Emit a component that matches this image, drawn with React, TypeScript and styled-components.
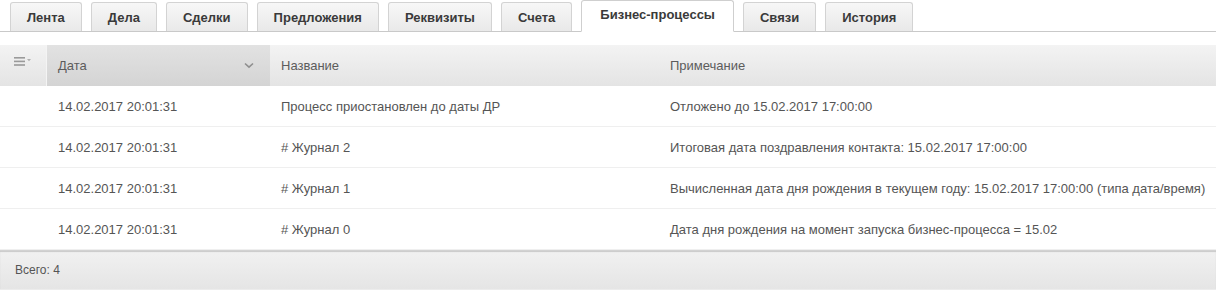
import React from "react";
import styled, { createGlobalStyle } from "styled-components";

const GlobalStyle = createGlobalStyle`
  html, body {
    margin: 0;
    padding: 0;
    background: #fff;
    font-family: "Liberation Sans", Arial, sans-serif;
  }
`;

interface TabProps {
  $active?: boolean;
}

const tabs = [
  "Лента",
  "Дела",
  "Сделки",
  "Предложения",
  "Реквизиты",
  "Счета",
  "Бизнес-процессы",
  "Связи",
  "История",
];

const rows = [
  {
    date: "14.02.2017 20:01:31",
    name: "Процесс приостановлен до даты ДР",
    note: "Отложено до 15.02.2017 17:00:00",
  },
  {
    date: "14.02.2017 20:01:31",
    name: "# Журнал 2",
    note: "Итоговая дата поздравления контакта: 15.02.2017 17:00:00",
  },
  {
    date: "14.02.2017 20:01:31",
    name: "# Журнал 1",
    note: "Вычисленная дата дня рождения в текущем году: 15.02.2017 17:00:00 (типа дата/время)",
  },
  {
    date: "14.02.2017 20:01:31",
    name: "# Журнал 0",
    note: "Дата дня рождения на момент запуска бизнес-процесса = 15.02",
  },
];

export default function App() {
  return (
    <Page>
      <GlobalStyle />
      <TabBar>
        {tabs.map((t, i) => (
          <Tab key={t} $active={i === 6}>
            {t}
          </Tab>
        ))}
      </TabBar>
      <Grid>
        <HeadRow>
          <MenuCell>
            <svg width="18" height="10" viewBox="0 0 18 10">
              <rect x="0" y="0" width="11" height="1.6" fill="#9a9a9a" />
              <rect x="0" y="3.6" width="11" height="1.6" fill="#9a9a9a" />
              <rect x="0" y="7.2" width="11" height="1.6" fill="#9a9a9a" />
              <path d="M13 2 L17 2 L15 4.2 Z" fill="#b0b0b0" />
            </svg>
          </MenuCell>
          <HeadCell $sorted>
            Дата
            <svg width="10" height="7" viewBox="0 0 10 7">
              <path
                d="M1 1.5 L5 5.2 L9 1.5"
                stroke="#8f8f8f"
                strokeWidth="1.6"
                fill="none"
              />
            </svg>
          </HeadCell>
          <HeadCell>Название</HeadCell>
          <HeadCell>Примечание</HeadCell>
        </HeadRow>
        {rows.map((r, i) => (
          <Row key={i}>
            <Cell />
            <Cell>{r.date}</Cell>
            <Cell>{r.name}</Cell>
            <Cell>{r.note}</Cell>
          </Row>
        ))}
        <Footer>Всего: 4</Footer>
      </Grid>
    </Page>
  );
}

const Page = styled.div`
  width: 1216px;
  height: 291px;
  overflow: hidden;
`;

const TabBar = styled.div`
  display: flex;
  align-items: flex-end;
  gap: 9px;
  height: 31px;
  padding-left: 10px;
  border-bottom: 1px solid #c9c9c9;
  margin-bottom: 13px;
`;

const Tab = styled.div<TabProps>`
  box-sizing: border-box;
  height: ${(p) => (p.$active ? "32px" : "29px")};
  margin-bottom: ${(p) => (p.$active ? "-1px" : "0")};
  padding: 0 ${(p) => (p.$active ? "18px" : "16px")};
  padding-bottom: ${(p) => (p.$active ? "4px" : "0")};
  display: flex;
  align-items: center;
  font-size: 13px;
  font-weight: bold;
  color: #3a3a3a;
  border: 1px solid ${(p) => (p.$active ? "#cfcfcf" : "#d3d3d3")};
  border-bottom: ${(p) => (p.$active ? "1px solid #fff" : "none")};
  border-radius: 3px 3px 0 0;
  background: ${(p) =>
    p.$active ? "#fff" : "linear-gradient(#f7f7f7, #e9e9e9)"};
  white-space: nowrap;
`;

const Grid = styled.div`
  display: flex;
  flex-direction: column;
  font-size: 13px;
  color: #555;
`;

const cols = `
  display: grid;
  grid-template-columns: 47px 223px 389px 1fr;
`;

const HeadRow = styled.div`
  ${cols}
  height: 41px;
  background: linear-gradient(#f3f3f3, #e4e4e4);
`;

const MenuCell = styled.div`
  display: flex;
  align-items: flex-start;
  padding: 12px 0 0 14px;
  border-right: 1px solid #f4f4f4;
`;

const HeadCell = styled.div<{ $sorted?: boolean }>`
  display: flex;
  align-items: center;
  justify-content: space-between;
  padding: 0 16px 0 11px;
  color: #5c5c5c;
  background: ${(p) =>
    p.$sorted ? "linear-gradient(#e2e2e2, #d4d4d4)" : "transparent"};
`;

const Row = styled.div`
  ${cols}
  height: 41px;
  border-bottom: 1px solid #efefef;
  box-sizing: border-box;
`;

const Cell = styled.div`
  display: flex;
  align-items: center;
  padding-left: 11px;
  white-space: nowrap;
`;

const Footer = styled.div`
  height: 38px;
  display: flex;
  align-items: center;
  padding-left: 15px;
  font-size: 12px;
  color: #555;
  border-top: 1px solid #d2d2d2;
  box-shadow: inset 0 1px 1px #c9c9c9;
  background: linear-gradient(#f1f1f1, #e5e5e5);
  border-bottom: 1px solid #ececec;
`;
